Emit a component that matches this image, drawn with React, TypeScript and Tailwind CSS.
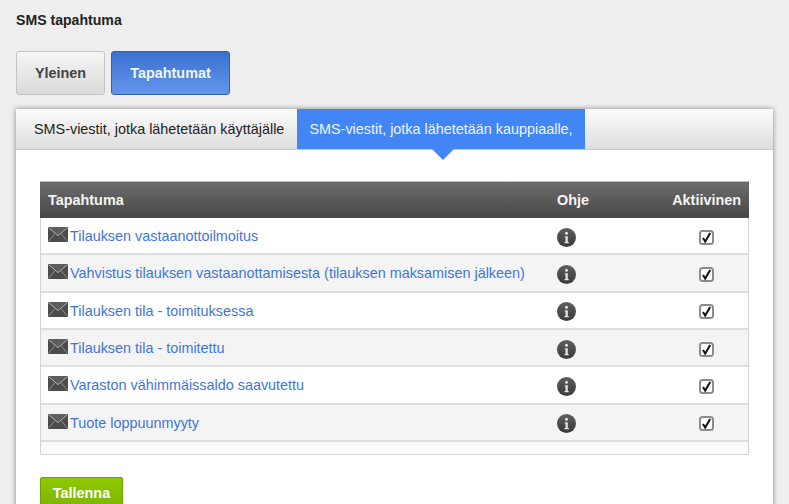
const rows = [
  "Tilauksen vastaanottoilmoitus",
  "Vahvistus tilauksen vastaanottamisesta (tilauksen maksamisen jälkeen)",
  "Tilauksen tila - toimituksessa",
  "Tilauksen tila - toimitettu",
  "Varaston vähimmäissaldo saavutettu",
  "Tuote loppuunmyyty",
];

function Mail() {
  return (
    <svg width="20" height="15" viewBox="0 0 20 15" className="shrink-0">
      <rect x="0" y="0" width="20" height="15" rx="0.5" fill="#4c4c4c" />
      <path d="M0 0 L10 8.2 L20 0 Z" fill="#5e5e5e" />
      <path d="M0.5 0.6 L10 8.6 L19.5 0.6" fill="none" stroke="#b4b4b4" strokeWidth="1" />
      <path d="M0.5 14.4 L7 6.5 M19.5 14.4 L13 6.5" fill="none" stroke="#8e8e8e" strokeWidth="1" />
    </svg>
  );
}

function Info() {
  return (
    <svg width="19" height="19" viewBox="0 0 19 19">
      <defs>
        <linearGradient id="infoFill" x1="0" y1="0" x2="0" y2="1">
          <stop offset="0" stopColor="#5e5e5e" />
          <stop offset="1" stopColor="#3a3a3a" />
        </linearGradient>
      </defs>
      <circle cx="9.5" cy="9.5" r="9.5" fill="url(#infoFill)" />
      <circle cx="9.5" cy="5.2" r="1.5" fill="#e4e4e4" />
      <path d="M7.8 8.2h3v5.8h0.9v1.2H7.5V14h1V9.4h-0.7z" fill="#e4e4e4" />
    </svg>
  );
}

function Check() {
  return (
    <svg width="15" height="15" viewBox="0 0 15 15">
      <rect x="1" y="1" width="13" height="13" rx="2.5" fill="#fff" stroke="#8c8c8c" strokeWidth="2" />
      <path d="M4 8 L6.2 11.6 L11.2 3" fill="none" stroke="#111" strokeWidth="2" />
    </svg>
  );
}

export default function App() {
  return (
    <div className="h-[504px] w-[789px] overflow-hidden bg-[#eeeeee] font-['Liberation_Sans',Arial,sans-serif]">
      <h1 className="pl-4 pt-[11px] text-[14.1px] leading-[18px] font-bold text-[#222]">SMS tapahtuma</h1>
      <div className="mt-[22px] flex gap-[6px] pl-4">
        <div className="flex h-[44px] w-[89px] items-center justify-center rounded-[3px] border border-[#c4c4c4] bg-gradient-to-b from-[#f6f6f6] to-[#d9d9d9] pt-px text-[14.4px] font-bold text-[#444]">
          Yleinen
        </div>
        <div className="flex h-[44px] w-[119px] items-center justify-center rounded-[3px] border border-[#2f5fb0] bg-gradient-to-b from-[#3c70cf] to-[#6296ec] pt-px text-[14.4px] font-bold text-[#f2f6ff]">
          Tapahtumat
        </div>
      </div>
      <div className="mx-4 mt-[14px] h-[400px] w-[757px] bg-white shadow-[0_0_5px_rgba(0,0,0,0.45)]">
        <div className="flex h-[41px] border-b border-[#c9c9c9] bg-gradient-to-b from-[#fbfbfb] to-[#dedede]">
          <div className="flex w-[281px] items-center pl-[18px] pt-px text-[14.4px] text-[#222]">
            SMS-viestit, jotka lähetetään käyttäjälle
          </div>
          <div className="relative flex h-[40px] w-[288px] items-center justify-center bg-[#4286f5] pt-px text-[14.4px] text-[#eef4ff]">
            SMS-viestit, jotka lähetetään kauppiaalle,
            <div className="absolute top-[40px] left-[135px] h-0 w-0 border-x-[11px] border-t-[11px] border-x-transparent border-t-[#4286f5]" />
          </div>
        </div>
        <div className="mx-6 mt-[31px] border-x border-b border-[#d4d4d4]">
          <div className="-mx-px flex h-[37px] items-center bg-gradient-to-b from-[#6d6d6d] to-[#474747] border-t border-[#bdbdbd] pt-px text-[14.4px] font-bold text-[#f4f4f4]">
            <div className="w-[517px] pl-2">Tapahtuma</div>
            <div className="w-[100px]">Ohje</div>
            <div className="w-[92px] pr-2 text-right">Aktiivinen</div>
          </div>
          {rows.map((r, i) => (
            <div
              key={r}
              className={`flex h-[37.33px] items-center border-b-2 border-[#dedede] ${i % 2 ? "bg-[#f4f4f4]" : "bg-white"}`}
            >
              <div className="flex w-[516px] items-center gap-[2px] pl-[7px]">
                <span className="-mt-[2px]"><Mail /></span>
                <a className="mt-[2px] text-[14.4px] text-[#3f76d6]">{r}</a>
              </div>
              <div className="mt-[3px] w-[142px]"><Info /></div>
              <span className="mt-[3px]"><Check /></span>
            </div>
          ))}
          <div className="h-[12px] bg-[#fafafa]" />
        </div>
        <div className="mx-6 mt-[22px] flex h-[40px] w-[83px] items-start justify-center rounded-[2px] border border-[#6fa000] bg-gradient-to-b from-[#8fc800] to-[#76b000] pt-[5px] text-[14.4px] font-bold text-white">
          Tallenna
        </div>
      </div>
    </div>
  );
}
